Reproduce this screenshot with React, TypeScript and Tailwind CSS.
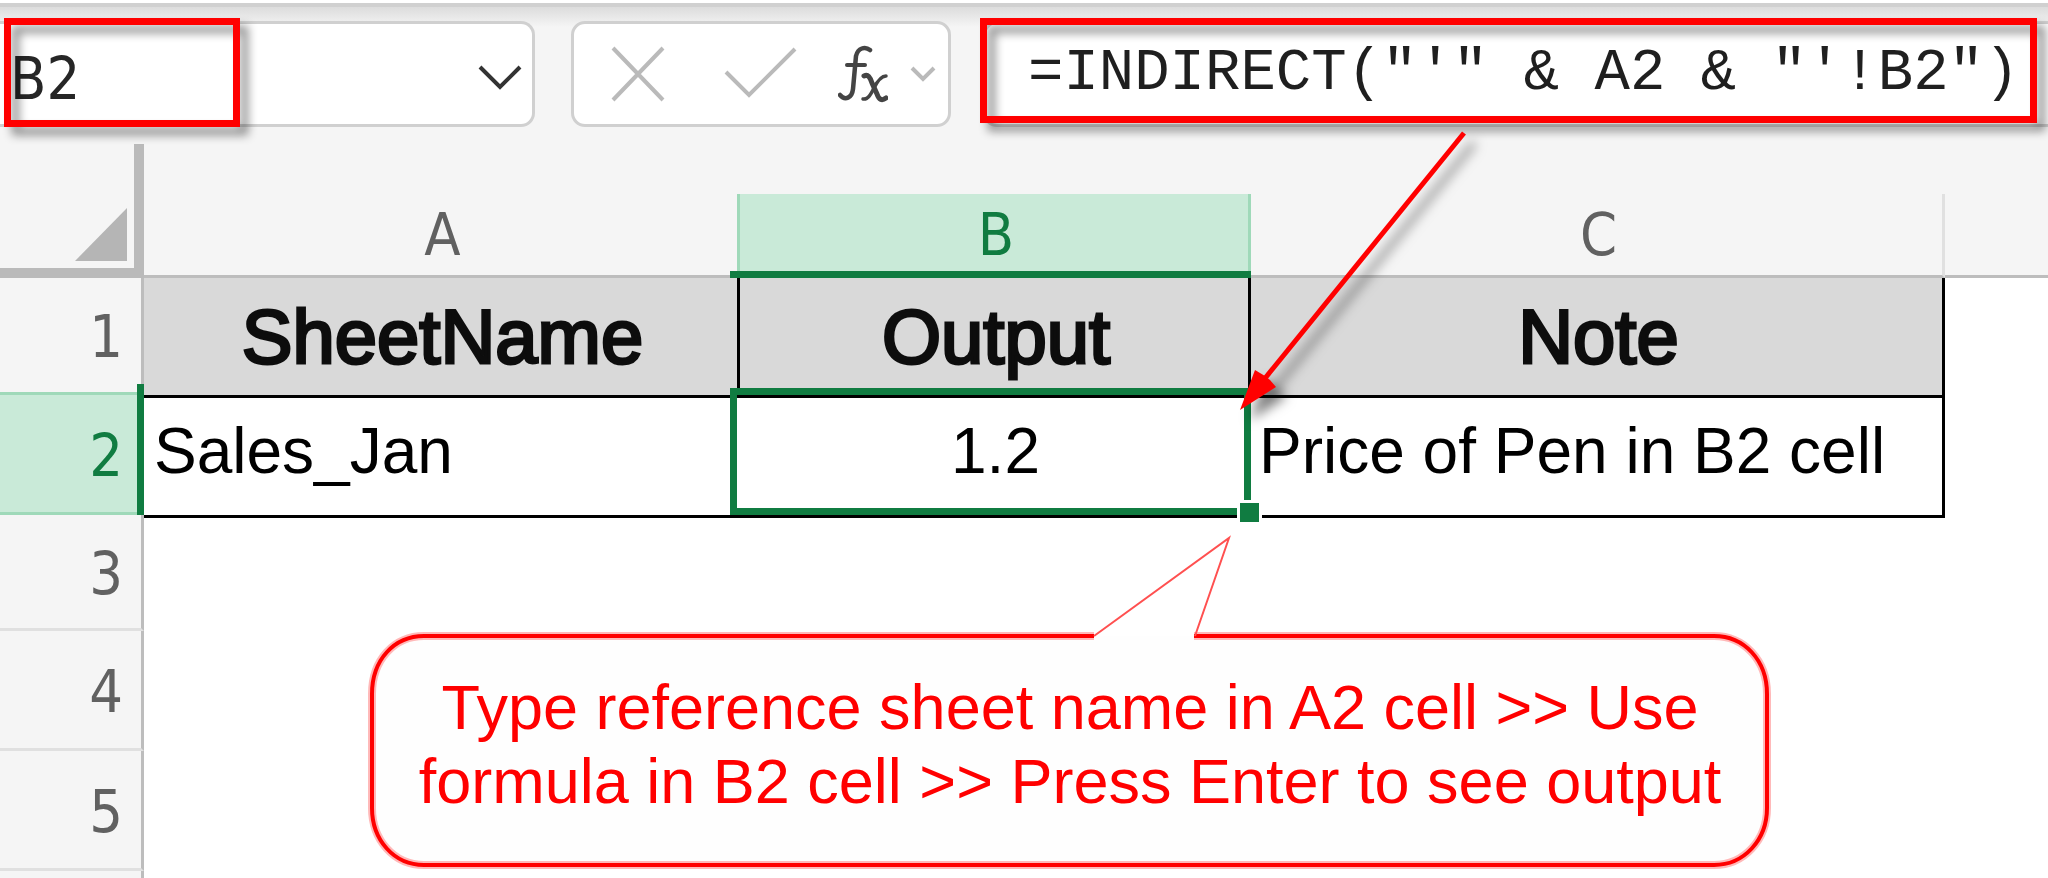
const columns = [
  { name: 'A', selected: false },
  { name: 'B', selected: true },
  { name: 'C', selected: false },
]

const emptyRows = [
  { number: 3, height: 'h-[116px]' },
  { number: 4, height: 'h-[120px]' },
  { number: 5, height: 'h-[120px]' },
]

const headingFont = "font-['DejaVu_Sans_Condensed','Roboto',sans-serif] text-[59px] leading-[72px] font-normal"
const rowHead = `${headingFont} border-r-[3px] border-b-[3px] border-r-[#bdbdbd] p-0 pt-[4px] pr-[18px] text-right align-middle`
const titleCell =
  'h-[117px] border-r-[3px] border-black bg-[#d9d9d9] p-0 pl-[4px] text-center align-middle text-[76px] leading-[88px] font-normal text-[#0d0d0d] [-webkit-text-stroke:3px_#0d0d0d]'
const redFrame =
  'pointer-events-none absolute border-[7px] border-[#ff0000] drop-shadow-[8px_8px_5px_rgba(0,0,0,0.45)]'

const calloutOutline =
  'M1094 636 H424 C394 636 372 660 372 694 V808 C372 840 394 865 424 865 H1714 C1744 865 1767 840 1767 808 V694 C1767 660 1744 636 1714 636 H1194'

const FormulaBar = () => {
  return (
    <header className="h-[137px] border-t-[4px] border-[#d0d0d0] bg-[linear-gradient(#dcdcdc,#f5f5f5_20px)] pt-[14px]">
      <div className="flex h-[106px]">
        {/* Name box */}
        <div className="relative flex w-[535px] shrink-0 items-center justify-between rounded-r-[14px] border-y-[3px] border-r-[3px] border-[#d0d0d0] bg-white pr-[10px]">
          <input
            aria-label="Name box"
            readOnly
            value="B2"
            className={`${headingFont} h-[80px] w-[220px] bg-transparent pt-[8px] pl-[10px] text-[#262626] outline-none`}
          />
          <button aria-label="Open name list" className="pt-[8px]">
            <svg width="44" height="30" viewBox="0 0 44 30" fill="none" stroke="#333" strokeWidth="4">
              <path d="M2 4 L22 24 L42 4" />
            </svg>
          </button>
          <div className={`${redFrame} top-[-6px] left-[4px] h-[109px] w-[236px]`} />
        </div>

        {/* Cancel, enter and insert function */}
        <div className="ml-[36px] flex w-[380px] shrink-0 items-center rounded-[14px] border-[3px] border-[#d0d0d0] bg-white pl-[36px]">
          <button aria-label="Cancel">
            <svg width="56" height="58" viewBox="0 0 56 58" fill="none" stroke="#bababa" strokeWidth="4">
              <path d="M3 3 L53 55 M53 3 L3 55" />
            </svg>
          </button>
          <button aria-label="Enter" className="ml-[58px]">
            <svg width="74" height="58" viewBox="0 0 74 58" fill="none" stroke="#bababa" strokeWidth="4">
              <path d="M2 27 L25 50 L71 4" />
            </svg>
          </button>
          <button aria-label="Insert function" className="ml-[40px]">
            <svg width="50" height="58" viewBox="0 0 50 58" fill="none" stroke="#444" strokeLinecap="round">
              <path d="M32 5 C27 1 20 3 18 11 L15 44 C14 53 7 56 2 50" strokeWidth="4.5" />
              <path d="M9 20 H27" strokeWidth="4" />
              <path d="M26 31 C30 29 32 32 34 38 L39 49 C41 55 44 56 48 53" strokeWidth="5" />
              <path d="M48 31 C43 31 39 37 36 43 C33 49 30 55 25 54" strokeWidth="3.5" />
            </svg>
          </button>
          <button aria-label="Function list" className="ml-[22px]">
            <svg width="26" height="18" viewBox="0 0 26 18" fill="none" stroke="#bababa" strokeWidth="4">
              <path d="M2 3 L13 14 L24 3" />
            </svg>
          </button>
        </div>

        {/* Formula */}
        <div className="relative ml-[32px] flex min-w-0 flex-1 items-center rounded-l-[14px] border-y-[3px] border-l-[3px] border-[#d0d0d0] bg-white">
          <input
            aria-label="Formula"
            readOnly
            value={`=INDIRECT("'" & A2 & "'!B2")`}
            className="h-[76px] w-full bg-transparent pl-[42px] font-['Liberation_Mono',monospace] text-[59px] leading-[76px] text-[#1f1f1f] outline-none"
          />
          <div className={`${redFrame} top-[-6px] right-[11px] left-[-6px] h-[105px]`} />
        </div>
      </div>
    </header>
  )
}

const Sheet = () => {
  return (
    <table className="w-full table-fixed border-separate border-spacing-0">
      <colgroup>
        <col className="w-[144px]" />
        <col className="w-[596px]" />
        <col className="w-[511px]" />
        <col className="w-[694px]" />
        <col />
      </colgroup>
      <thead>
        <tr>
          <th className="h-[134px] border-r-[10px] border-b-[10px] border-[#bababa] p-0 pr-[7px] pb-[7px] align-bottom">
            <svg className="ml-auto block" width="52" height="53" viewBox="0 0 52 53" fill="#b5b5b5">
              <path d="M52 0 V53 H0 Z" />
            </svg>
          </th>
          {columns.map((column) => (
            <th key={column.name} scope="col" className="p-0 align-bottom">
              <div
                className={`${headingFont} relative h-[84px] border-b-[3px] border-b-[#bdbdbd] border-r-[3px] pt-[5px] pl-[4px] ${
                  column.selected ? 'bg-[#c9ead8] text-[#107c41]' : 'text-[#616161]'
                } ${column.name === 'C' ? 'border-r-[#e0e0e0]' : 'border-r-[#9fd9b9]'}`}
              >
                {column.name}
                {column.selected && (
                  <span className="absolute -right-[3px] -bottom-[3px] -left-[10px] h-[7px] bg-[#107c41]" />
                )}
              </div>
            </th>
          ))}
          <td className="border-b-[3px] border-[#bdbdbd] p-0" />
        </tr>
      </thead>
      <tbody className="bg-white text-[64px] leading-[72px] text-black">
        <tr>
          <th scope="row" className={`${rowHead} border-b-[#9fd9b9] bg-[#f5f5f5] text-[#616161]`}>1</th>
          <td className={titleCell}>SheetName</td>
          <td className={titleCell}>Output</td>
          <td className={titleCell}>Note</td>
          <td />
        </tr>
        <tr>
          <th scope="row" className={`${rowHead} relative border-b-[#9fd9b9] bg-[#c9ead8] text-[#107c41]`}>
            2
            <span className="absolute -top-[11px] -right-[3px] -bottom-[3px] w-[7px] bg-[#107c41]" />
          </th>
          <td className="h-[120px] border-t-[3px] border-black p-0 pb-[12px] pl-[10px]">Sales_Jan</td>
          <td className="relative border-t-[3px] border-black p-0 pb-[12px] text-center">
            1.2
            {/* Selection outline with its fill handle */}
            <span className="absolute -top-[10px] right-0 bottom-0 -left-[10px] border-[7px] border-[#107c41]" />
            <span className="absolute -right-[11px] -bottom-[10px] size-[25px] border-[3px] border-white bg-[#107c41]" />
          </td>
          <td className="border-t-[3px] border-r-[3px] border-black p-0 pb-[12px] pl-[8px]">Price of Pen in B2 cell</td>
          <td />
        </tr>
        {emptyRows.map((row) => (
          <tr key={row.number}>
            <th scope="row" className={`${rowHead} ${row.height} border-b-[#e0e0e0] bg-[#f5f5f5] text-[#616161]`}>
              {row.number}
            </th>
            <td colSpan={3} className={row.number === 3 ? 'border-t-[3px] border-black' : ''} />
            <td />
          </tr>
        ))}
        {/* The next row starts at the bottom edge */}
        <tr>
          <td className="h-[40px] border-r-[3px] border-[#bdbdbd] bg-[#f5f5f5]" />
          <td colSpan={4} />
        </tr>
      </tbody>
    </table>
  )
}

const Callout = () => {
  return (
    <div className="absolute top-[530px] left-[366px] z-10 h-[342px] w-[1408px]">
      <svg className="absolute inset-0" width="1408" height="342" viewBox="366 530 1408 342" fill="none">
        <path d={calloutOutline} fill="#fefefe" stroke="#ffb9b9" strokeWidth="8" />
        <path d={calloutOutline} stroke="#ff0000" strokeWidth="4" />
        <path d="M1094 636 L1229 538 L1195 636" stroke="#ff5050" strokeWidth="2" />
      </svg>
      <p className="relative pt-[140px] text-center text-[63px] leading-[74px] text-[#ff0000]">
        Type reference sheet name in A2 cell &gt;&gt; Use
        <br />
        formula in B2 cell &gt;&gt; Press Enter to see output
      </p>
    </div>
  )
}

export default function App() {
  return (
    <main className="relative h-screen overflow-hidden bg-[#f5f5f5] font-['Liberation_Sans',Arial,sans-serif]">
      <div className="h-[3px] bg-white" />
      <FormulaBar />
      <div className="pt-[4px]">
        <Sheet />
      </div>

      {/* Arrow from the formula to the result cell */}
      <svg
        className="pointer-events-none absolute top-0 left-[1200px] z-10 drop-shadow-[10px_10px_6px_rgba(0,0,0,0.5)]"
        width="300"
        height="440"
        viewBox="1200 0 300 440"
      >
        <path d="M1464 133 L1262 382" stroke="#ff0000" strokeWidth="5" />
        <path d="M1240 410 L1255 370 L1265 376 L1270 380 L1276 387 Z" fill="#ff0000" />
      </svg>
      <Callout />
    </main>
  )
}
